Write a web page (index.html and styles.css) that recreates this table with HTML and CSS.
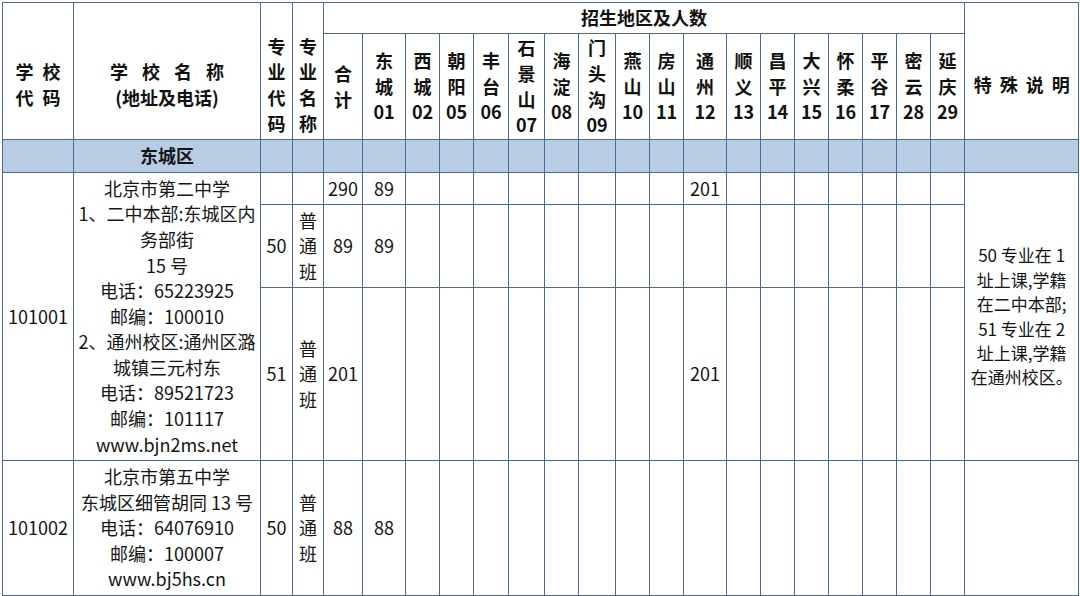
FILE: index.html
```html
<!DOCTYPE html>
<html lang="zh-CN">
<head>
<meta charset="utf-8">
<title>招生计划</title>
<link rel="stylesheet" href="styles.css">
</head>
<body>
<table class="plan">
  <colgroup>
    <col style="width:71px"><col style="width:187px"><col style="width:32px"><col style="width:31px">
    <col style="width:39px"><col style="width:43px"><col style="width:34px"><col style="width:34px">
    <col style="width:35px"><col style="width:36px"><col style="width:34px"><col style="width:37px">
    <col style="width:34px"><col style="width:34px"><col style="width:43px"><col style="width:34px">
    <col style="width:34px"><col style="width:34px"><col style="width:34px"><col style="width:34px">
    <col style="width:34px"><col style="width:34px"><col style="width:114px">
  </colgroup>
  <thead>
    <tr class="h1">
      <th rowspan="2" class="low"><span class="sp9">学校</span><br><span class="sp9">代码</span></th>
      <th rowspan="2" class="low"><span class="sp14">学校名称</span><br>(地址及电话)</th>
      <th rowspan="2" class="low">专<br>业<br>代<br>码</th>
      <th rowspan="2" class="low">专<br>业<br>名<br>称</th>
      <th colspan="18">招生地区及人数</th>
      <th rowspan="2" class="low"><span class="sp10">特殊说明</span></th>
    </tr>
    <tr class="h2">
      <th>合<br>计</th>
      <th>东<br>城<br>01</th>
      <th>西<br>城<br>02</th>
      <th>朝<br>阳<br>05</th>
      <th>丰<br>台<br>06</th>
      <th>石<br>景<br>山<br>07</th>
      <th>海<br>淀<br>08</th>
      <th>门<br>头<br>沟<br>09</th>
      <th>燕<br>山<br>10</th>
      <th>房<br>山<br>11</th>
      <th>通<br>州<br>12</th>
      <th>顺<br>义<br>13</th>
      <th>昌<br>平<br>14</th>
      <th>大<br>兴<br>15</th>
      <th>怀<br>柔<br>16</th>
      <th>平<br>谷<br>17</th>
      <th>密<br>云<br>28</th>
      <th>延<br>庆<br>29</th>
    </tr>
  </thead>
  <tbody>
    <tr class="district">
      <td></td><td class="dname">东城区</td>
      <td></td><td></td><td></td><td></td><td></td><td></td><td></td><td></td><td></td><td></td>
      <td></td><td></td><td></td><td></td><td></td><td></td><td></td><td></td><td></td><td></td><td></td>
    </tr>
    <tr class="r1">
      <td rowspan="3">101001</td>
      <td rowspan="3" class="addr">北京市第二中学<br>1、二中本部:东城区内<br>务部街<br>15 号<br>电话：65223925<br>邮编：100010<br>2、通州校区:通州区潞<br>城镇三元村东<br>电话：89521723<br>邮编：101117<br>www.bjn2ms.net</td>
      <td></td><td></td>
      <td>290</td><td>89</td>
      <td></td><td></td><td></td><td></td><td></td><td></td><td></td><td></td>
      <td>201</td>
      <td></td><td></td><td></td><td></td><td></td><td></td><td></td>
      <td rowspan="3" class="note">50 专业在 1<br>址上课,学籍<br>在二中本部;<br>51 专业在 2<br>址上课,学籍<br>在通州校区。</td>
    </tr>
    <tr class="r2">
      <td>50</td><td class="major">普<br>通<br>班</td>
      <td>89</td><td>89</td>
      <td></td><td></td><td></td><td></td><td></td><td></td><td></td><td></td>
      <td></td>
      <td></td><td></td><td></td><td></td><td></td><td></td><td></td>
    </tr>
    <tr class="r3">
      <td>51</td><td class="major">普<br>通<br>班</td>
      <td>201</td><td></td>
      <td></td><td></td><td></td><td></td><td></td><td></td><td></td><td></td>
      <td>201</td>
      <td></td><td></td><td></td><td></td><td></td><td></td><td></td>
    </tr>
    <tr class="r4">
      <td>101002</td>
      <td class="addr">北京市第五中学<br>东城区细管胡同 13 号<br>电话：64076910<br>邮编：100007<br>www.bj5hs.cn</td>
      <td>50</td><td class="major">普<br>通<br>班</td>
      <td>88</td><td>88</td>
      <td></td><td></td><td></td><td></td><td></td><td></td><td></td><td></td>
      <td></td>
      <td></td><td></td><td></td><td></td><td></td><td></td><td></td>
      <td></td>
    </tr>
  </tbody>
</table>
</body>
</html>
```

FILE: styles.css
```css
html, body {
  margin: 0;
  padding: 0;
  background: #ffffff;
}

body {
  padding: 2px 0 0 2px;
  font-family: "Noto Sans CJK SC", "Noto Sans", sans-serif;
  color: #151515;
}

.plan {
  border-collapse: collapse;
  table-layout: fixed;
  width: 1076px;
  font-size: 18px;
  line-height: 25.6px;
}

.plan th,
.plan td {
  border: 1px solid #4a6a9c;
  padding: 0;
  text-align: center;
  vertical-align: middle;
  white-space: nowrap;
}

.plan td {
  overflow: hidden;
}

.plan th {
  font-weight: 700;
  color: #111111;
}

.plan th.low {
  padding-top: 28px;
}

.h1 { height: 31px; }
.h2 { height: 106px; }
.district { height: 33px; }
.r1 { height: 32px; }
.r2 { height: 83px; }
.r3 { height: 173px; }
.r4 { height: 135px; }

.district td {
  background: #b8cce4;
}

.dname {
  font-weight: 700;
}

.sp9 {
  display: inline-block;
  letter-spacing: 9px;
  margin-right: -9px;
}

.sp14 {
  display: inline-block;
  letter-spacing: 14px;
  margin-right: -14px;
}

.sp10 {
  display: inline-block;
  letter-spacing: 8px;
  margin-right: -8px;
}

.note {
  font-size: 17px;
  line-height: 24.4px;
}
```
